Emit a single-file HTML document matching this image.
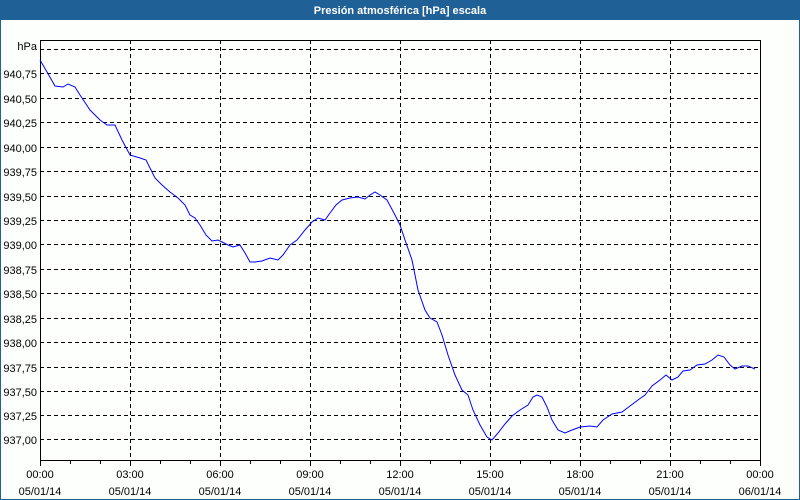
<!DOCTYPE html>
<html><head><meta charset="utf-8"><style>
html,body{margin:0;padding:0;background:#fdfffd}
svg{display:block}
text{font-family:"Liberation Sans",sans-serif;font-size:11px;fill:#000}
</style></head><body>
<svg width="800" height="500" xmlns="http://www.w3.org/2000/svg">
<rect x="0" y="0" width="800" height="500" fill="#fdfffd"/>
<rect x="0.5" y="0.5" width="799" height="499" fill="none" stroke="#1f6096"/>
<rect x="0" y="0" width="800" height="20" fill="#1f6096"/>
<text x="400" y="14" text-anchor="middle" style="fill:#fff;font-weight:bold;font-size:11px">Presión atmosférica [hPa] escala</text>
<g stroke="#000" stroke-width="1" stroke-dasharray="4,3">
<line x1="40" y1="49.5" x2="760" y2="49.5"/>
<line x1="40" y1="73.5" x2="760" y2="73.5"/>
<line x1="40" y1="98.5" x2="760" y2="98.5"/>
<line x1="40" y1="122.5" x2="760" y2="122.5"/>
<line x1="40" y1="147.5" x2="760" y2="147.5"/>
<line x1="40" y1="171.5" x2="760" y2="171.5"/>
<line x1="40" y1="196.5" x2="760" y2="196.5"/>
<line x1="40" y1="220.5" x2="760" y2="220.5"/>
<line x1="40" y1="244.5" x2="760" y2="244.5"/>
<line x1="40" y1="269.5" x2="760" y2="269.5"/>
<line x1="40" y1="293.5" x2="760" y2="293.5"/>
<line x1="40" y1="318.5" x2="760" y2="318.5"/>
<line x1="40" y1="342.5" x2="760" y2="342.5"/>
<line x1="40" y1="367.5" x2="760" y2="367.5"/>
<line x1="40" y1="391.5" x2="760" y2="391.5"/>
<line x1="40" y1="415.5" x2="760" y2="415.5"/>
<line x1="40" y1="439.5" x2="760" y2="439.5"/>
<line x1="130.5" y1="40" x2="130.5" y2="460"/>
<line x1="220.5" y1="40" x2="220.5" y2="460"/>
<line x1="310.5" y1="40" x2="310.5" y2="460"/>
<line x1="400.5" y1="40" x2="400.5" y2="460"/>
<line x1="490.5" y1="40" x2="490.5" y2="460"/>
<line x1="580.5" y1="40" x2="580.5" y2="460"/>
<line x1="670.5" y1="40" x2="670.5" y2="460"/>
</g>
<rect x="40.5" y="40.5" width="720" height="420" fill="none" stroke="#000"/>
<g stroke="#000">
<path d="M40.5 460v6M70.5 460v4M100.5 460v4M130.5 460v6M160.5 460v4M190.5 460v4M220.5 460v6M250.5 460v4M280.5 460v4M310.5 460v6M340.5 460v4M370.5 460v4M400.5 460v6M430.5 460v4M460.5 460v4M490.5 460v6M520.5 460v4M550.5 460v4M580.5 460v6M610.5 460v4M640.5 460v4M670.5 460v6M700.5 460v4M730.5 460v4M760.5 460v6"/>
</g>
<polyline fill="none" stroke="#0000ff" stroke-width="1" points="40,60 47,72 55,86 63,87 68,84 75,87 80,95 90,110 100,120 107,125 115,125 122,140 130,155 140,158 146,160 150,168 155,178 162,185 170,192 178,198 185,205 190,215 195,218 200,225 206,235 212,241 218,240 222,242 228,245 233,247 240,245 245,253 250,262 255,262 262,261 270,258 278,260 283,255 290,245 297,240 305,230 312,222 318,218 325,220 330,213 336,205 342,200 350,198 358,197 365,199 370,195 375,192 380,195 387,200 395,215 400,225 405,240 412,260 418,290 425,310 430,318 437,322 442,335 448,355 455,375 462,390 468,395 473,410 480,425 487,437 492,440 498,433 505,424 512,416 520,410 528,405 533,397 537,395 542,397 547,407 552,420 558,430 565,433 572,430 580,427 590,426 597,427 603,420 612,414 622,412 630,406 638,400 645,395 652,386 660,380 666,375 672,380 678,377 683,371 690,370 697,365 705,364 712,360 718,355 724,357 730,365 735,369 742,366 748,366 755,369"/>
<g text-anchor="end">
<text x="37" y="50">hPa</text>
<text x="37" y="78">940,75</text>
<text x="37" y="103">940,50</text>
<text x="37" y="127">940,25</text>
<text x="37" y="152">940,00</text>
<text x="37" y="176">939,75</text>
<text x="37" y="201">939,50</text>
<text x="37" y="225">939,25</text>
<text x="37" y="249">939,00</text>
<text x="37" y="274">938,75</text>
<text x="37" y="298">938,50</text>
<text x="37" y="323">938,25</text>
<text x="37" y="347">938,00</text>
<text x="37" y="372">937,75</text>
<text x="37" y="396">937,50</text>
<text x="37" y="420">937,25</text>
<text x="37" y="444">937,00</text>
</g>
<g text-anchor="middle">
<text x="40" y="478">00:00</text><text x="40" y="495">05/01/14</text>
<text x="130" y="478">03:00</text><text x="130" y="495">05/01/14</text>
<text x="220" y="478">06:00</text><text x="220" y="495">05/01/14</text>
<text x="310" y="478">09:00</text><text x="310" y="495">05/01/14</text>
<text x="400" y="478">12:00</text><text x="400" y="495">05/01/14</text>
<text x="490" y="478">15:00</text><text x="490" y="495">05/01/14</text>
<text x="580" y="478">18:00</text><text x="580" y="495">05/01/14</text>
<text x="670" y="478">21:00</text><text x="670" y="495">05/01/14</text>
<text x="760" y="478">00:00</text><text x="760" y="495">06/01/14</text>
</g>
</svg>
</body></html>
